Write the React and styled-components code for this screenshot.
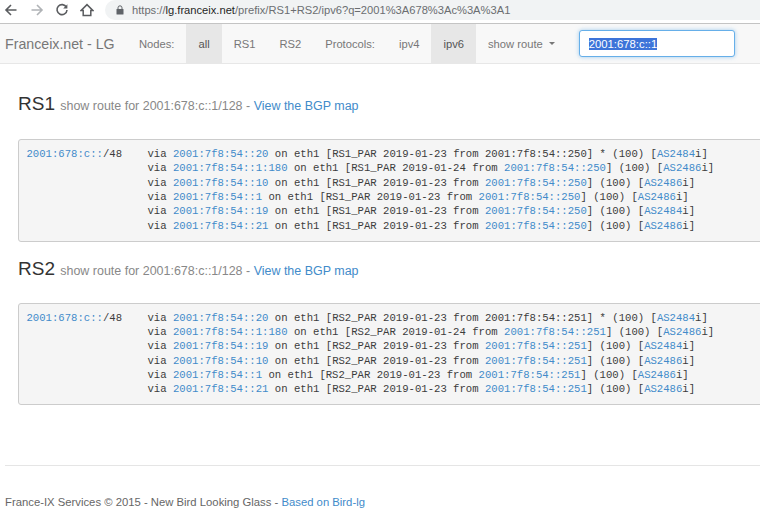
import React from 'react';
import styled, { createGlobalStyle } from 'styled-components';

const Global = createGlobalStyle`
  html, body { margin: 0; padding: 0; background: #fff; overflow: hidden; height: 525px; }
  body { font-family: "Liberation Sans", Arial, sans-serif; color: #333; }
`;
const Page = styled.div`width: 760px; height: 525px; overflow: hidden; display: flex; flex-direction: column;`;
const BrowserBar = styled.div`
  height: 24px; box-sizing: border-box; flex: none; display: flex; align-items: flex-start; background: #fff; border-bottom: 1px solid #c4c4c4; overflow: hidden;
`;
const IconButton = styled.span`
  width: ${p => p.$w}px; flex: none; height: 20px; display: flex; align-items: center; justify-content: center; color: ${p => p.$dim ? '#b0b3b6' : '#5a5c5f'};
`;
const AddressPill = styled.div`
  margin-left: 3px; flex: 1; height: 20px; margin-right: -20px; background: #f1f3f4; border-radius: 0 0 0 10px; border-top-left-radius: 10px; display: flex; align-items: center; padding-left: 11px; gap: 8px; font-size: 11.17px; color: #6b6e71; white-space: nowrap;
`;
const Host = styled.b`font-weight: 400; color: #1f1f1f;`;
const Navbar = styled.nav`
  height: 40px; flex: none; box-sizing: border-box; background: #f8f8f8; border-bottom: 1px solid #e7e7e7; display: flex; align-items: stretch; font-size: 11.2px; color: #777; padding-left: 5px;
`;
const Brand = styled.div`font-size: 14.2px; width: 122px; flex: none; display: flex; align-items: center; color: #777; white-space: nowrap;`;
const NavItem = styled.div`
  padding: 0 12px; display: flex; align-items: center; flex: none;
  background: ${p => p.$active ? '#e7e7e7' : 'transparent'}; color: ${p => p.$active ? '#555' : '#777'};
`;
const Caret = styled.span`
  display: inline-block; margin-left: 6px; border-top: 3.5px solid #777; border-left: 3.5px solid transparent; border-right: 3.5px solid transparent;
`;
const Search = styled.div`
  margin: 6px 0 0 12px; width: 156px; height: 27px; box-sizing: border-box; background: #fff; border: 1px solid #66afe9; border-radius: 3px; box-shadow: 0 0 4px rgba(102,175,233,.6); display: flex; align-items: center; padding-left: 9px; font-size: 11.3px; color: #555;
`;
const Selected = styled.span`background: #3d74d9; color: #fff;`;
const Main = styled.main`padding: 0 0 0 18px; display: flex; flex-direction: column; flex: none;`;
const Title = styled.h1`
  margin: ${p => p.$top}px 0 0; font-weight: 400; font-size: 19px; line-height: 22px; color: #333; white-space: nowrap;
`;
const Sub = styled.small`font-size: 12.47px; color: #888; a { color: #428bca; text-decoration: none; }`;
const Pre = styled.pre`
  margin: ${p => p.$top}px 0 0; width: 780px; box-sizing: border-box; height: 102.5px; padding: 7px 7.5px; background: #f5f5f5; border: 1px solid #ccc; border-radius: 3px;
  font-family: "Liberation Mono", "Courier New", monospace; font-size: 10.62px; line-height: 14.35px; color: #3c3c3c; overflow: hidden;
  a { color: #428bca; text-decoration: none; }
`;
const Footer = styled.footer`
  margin: 0 0 0 5px; border-top: 1px solid #e5e5e5; padding-top: 28px; font-size: 11.3px; color: #666; white-space: nowrap; line-height: 16px;
  a { color: #428bca; text-decoration: none; }
`;
const Spacer = styled.div`height: ${p => p.$h}px; flex: none;`;

const Back = () => (
  <svg width="14" height="14" viewBox="0 0 14 14" fill="none" stroke="currentColor" strokeWidth="1.6"><path d="M12.5 7H2M7 2 2 7l5 5" /></svg>
);
const Forward = () => (
  <svg width="14" height="14" viewBox="0 0 14 14" fill="none" stroke="currentColor" strokeWidth="1.6"><path d="M1.5 7H12M7 2l5 5-5 5" /></svg>
);
const Reload = () => (
  <svg width="14" height="14" viewBox="0 0 14 14" fill="none" stroke="currentColor" strokeWidth="1.6"><path d="M11.4 4.2A5 5 0 1 0 12 7" /><path d="M12.4 1.2v4.2H8.2z" fill="currentColor" stroke="none" /></svg>
);
const Home = () => (
  <svg width="14" height="14" viewBox="0 0 14 14" fill="none" stroke="currentColor" strokeWidth="1.5"><path d="M7 1.6 1.2 7.4h2v5.1h7.6V7.4h2z" /></svg>
);
const Lock = () => (
  <svg width="8" height="10" viewBox="0 0 8 10" fill="#5f6368"><rect x="0.5" y="4" width="7" height="5.5" rx="0.6" /><path d="M2 4V2.8a2 2 0 0 1 4 0V4" fill="none" stroke="#5f6368" strokeWidth="1" /></svg>
);

const A = ({ children }) => <a href="#x">{children}</a>;

const Route = ({ via, rest, date, from, fromLink, star, as }) => (
  <>
    <A>{via}</A> on eth1 [{rest} {date} from {fromLink ? <A>{from}</A> : from}] {star ? '* ' : ''}(100) [<A>{as}</A>i]
  </>
);

const INDENT = ' '.repeat(19);
const rs1 = [
  ['2001:7f8:54::20', 'RS1_PAR', '2019-01-23', '2001:7f8:54::250', false, true, 'AS2484'],
  ['2001:7f8:54::1:180', 'RS1_PAR', '2019-01-24', '2001:7f8:54::250', true, false, 'AS2486'],
  ['2001:7f8:54::10', 'RS1_PAR', '2019-01-23', '2001:7f8:54::250', true, false, 'AS2486'],
  ['2001:7f8:54::1', 'RS1_PAR', '2019-01-23', '2001:7f8:54::250', true, false, 'AS2486'],
  ['2001:7f8:54::19', 'RS1_PAR', '2019-01-23', '2001:7f8:54::250', true, false, 'AS2484'],
  ['2001:7f8:54::21', 'RS1_PAR', '2019-01-23', '2001:7f8:54::250', true, false, 'AS2486'],
];
const rs2 = [
  ['2001:7f8:54::20', 'RS2_PAR', '2019-01-23', '2001:7f8:54::251', false, true, 'AS2484'],
  ['2001:7f8:54::1:180', 'RS2_PAR', '2019-01-24', '2001:7f8:54::251', true, false, 'AS2486'],
  ['2001:7f8:54::19', 'RS2_PAR', '2019-01-23', '2001:7f8:54::251', true, false, 'AS2484'],
  ['2001:7f8:54::10', 'RS2_PAR', '2019-01-23', '2001:7f8:54::251', true, false, 'AS2486'],
  ['2001:7f8:54::1', 'RS2_PAR', '2019-01-23', '2001:7f8:54::251', true, false, 'AS2486'],
  ['2001:7f8:54::21', 'RS2_PAR', '2019-01-23', '2001:7f8:54::251', true, false, 'AS2486'],
];

const Block = ({ rows, top }) => (
  <Pre $top={top}>
    <A>2001:678:c::</A>/48{'    '}
    {rows.map((r, i) => (
      <React.Fragment key={i}>
        {i > 0 ? '\n' + INDENT : ''}via <Route via={r[0]} rest={r[1]} date={r[2]} from={r[3]} fromLink={r[4]} star={r[5]} as={r[6]} />
      </React.Fragment>
    ))}
  </Pre>
);

export default function App() {
  return (
    <Page>
      <Global />
      <BrowserBar>
        <IconButton $w={22}><Back /></IconButton>
        <IconButton $w={30} $dim><Forward /></IconButton>
        <IconButton $w={20}><Reload /></IconButton>
        <IconButton $w={30}><Home /></IconButton>
        <AddressPill><Lock /><span>https://<Host>lg.franceix.net</Host>/prefix/RS1+RS2/ipv6?q=2001%3A678%3Ac%3A%3A1</span></AddressPill>
      </BrowserBar>
      <Navbar>
        <Brand>Franceix.net - LG</Brand>
        <NavItem>Nodes:</NavItem>
        <NavItem $active>all</NavItem>
        <NavItem>RS1</NavItem>
        <NavItem>RS2</NavItem>
        <NavItem>Protocols:</NavItem>
        <NavItem>ipv4</NavItem>
        <NavItem $active>ipv6</NavItem>
        <NavItem>show route<Caret /></NavItem>
        <Search><Selected>2001:678:c::1</Selected></Search>
      </Navbar>
      <Main>
        <Title $top={29}>RS1 <Sub>show route for 2001:678:c::1/128 - <A>View the BGP map</A></Sub></Title>
        <Block rows={rs1} top={22} />
        <Title $top={16}>RS2 <Sub>show route for 2001:678:c::1/128 - <A>View the BGP map</A></Sub></Title>
        <Block rows={rs2} top={21} />
        <Spacer $h={60} />
      </Main>
      <Footer>France-IX Services © 2015 - New Bird Looking Glass - <A>Based on Bird-lg</A></Footer>
    </Page>
  );
}
